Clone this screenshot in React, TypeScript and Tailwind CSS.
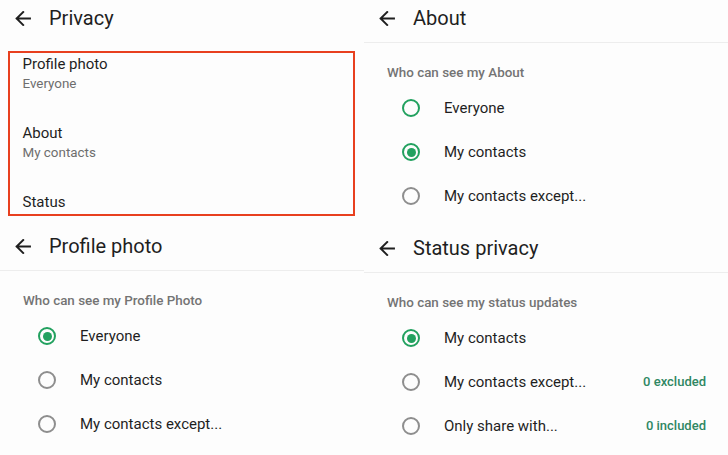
/**
 * PrivacyCollage — four WhatsApp privacy screens in a 2x2 grid.
 */

type Option = { label: string; state: 'on' | 'off' | 'focus'; count?: string };

function BackArrow() {
  return (
    <svg width="16" height="15" viewBox="0 0 16 15" fill="none" className="shrink-0">
      <path d="M15 7.5H1.8M8.2 1 1.6 7.5 8.2 14" stroke="#1f1f1f" strokeWidth="1.9" strokeLinecap="square" />
    </svg>
  );
}

function Header({ title, divider = true }: { title: string; divider?: boolean }) {
  return (
    <div className={`flex h-[43px] items-start pt-[5px] ${divider ? 'border-b border-[#ededed]' : ''}`}>
      <div className="flex h-[26px] items-center pl-[15px]">
        <BackArrow />
        <span className="ml-[18px] text-[20px] leading-[26px] text-[#1f1f1f]">{title}</span>
      </div>
    </div>
  );
}

function Radio({ state }: { state: Option['state'] }) {
  const ring = state === 'off' ? 'border-[#8e8e8e]' : 'border-[#22a15f]';
  return (
    <span className={`flex h-[18px] w-[18px] shrink-0 items-center justify-center rounded-full border-2 ${ring}`}>
      {state === 'on' && <span className="h-[9px] w-[9px] rounded-full bg-[#22a15f]" />}
    </span>
  );
}

function ChoiceScreen({ title, caption, options, offset = '' }: { title: string; caption: string; options: Option[]; offset?: string }) {
  return (
    <div className={`flex flex-col ${offset}`}>
      <Header title={title} />
      <div className="pl-[23px] pt-[20px] text-[13.4px] font-medium leading-[20px] text-[#747474]">{caption}</div>
      <div className="mt-[3px] flex flex-col">
        {options.map((o) => (
          <div key={o.label} className="flex h-[44px] items-center pl-[38px] pr-[22px]">
            <Radio state={o.state} />
            <span className="ml-[24px] flex-1 text-[15px] text-[#1f1f1f]">{o.label}</span>
            {o.count && <span className="text-[13px] font-medium text-[#2f8763]">{o.count}</span>}
          </div>
        ))}
      </div>
    </div>
  );
}

function PrivacyScreen() {
  const items = [
    { title: 'Profile photo', sub: 'Everyone' },
    { title: 'About', sub: 'My contacts' },
    { title: 'Status', sub: '' },
  ];
  return (
    <div className="flex flex-col">
      <Header title="Privacy" divider={false} />
      <div className="ml-[8px] mt-[8px] h-[165px] w-[347px] border-[2.5px] border-[#e8401f] pl-[12.5px] pt-[0.5px]">
        {items.map((it) => (
          <div key={it.title} className="h-[69px]">
            <div className="text-[15px] leading-[20px] text-[#1f1f1f]">{it.title}</div>
            {it.sub && <div className="mt-px text-[13.4px] leading-[18px] text-[#6e6e6e]">{it.sub}</div>}
          </div>
        ))}
      </div>
    </div>
  );
}

export default function App() {
  return (
    <div className="grid h-[455px] w-[728px] grid-cols-[364px_364px] grid-rows-[228px_227px] overflow-hidden bg-[#fdfdfd] font-['Roboto',sans-serif]">
      <PrivacyScreen />
      <ChoiceScreen
        title="About"
        caption="Who can see my About"
        options={[
          { label: 'Everyone', state: 'focus' },
          { label: 'My contacts', state: 'on' },
          { label: 'My contacts except...', state: 'off' },
        ]}
      />
      <ChoiceScreen
        title="Profile photo"
        caption="Who can see my Profile Photo"
        options={[
          { label: 'Everyone', state: 'on' },
          { label: 'My contacts', state: 'off' },
          { label: 'My contacts except...', state: 'off' },
        ]}
      />
      <ChoiceScreen
        title="Status privacy"
        caption="Who can see my status updates"
        offset="pt-[2px]"
        options={[
          { label: 'My contacts', state: 'on' },
          { label: 'My contacts except...', state: 'off', count: '0 excluded' },
          { label: 'Only share with...', state: 'off', count: '0 included' },
        ]}
      />
    </div>
  );
}
